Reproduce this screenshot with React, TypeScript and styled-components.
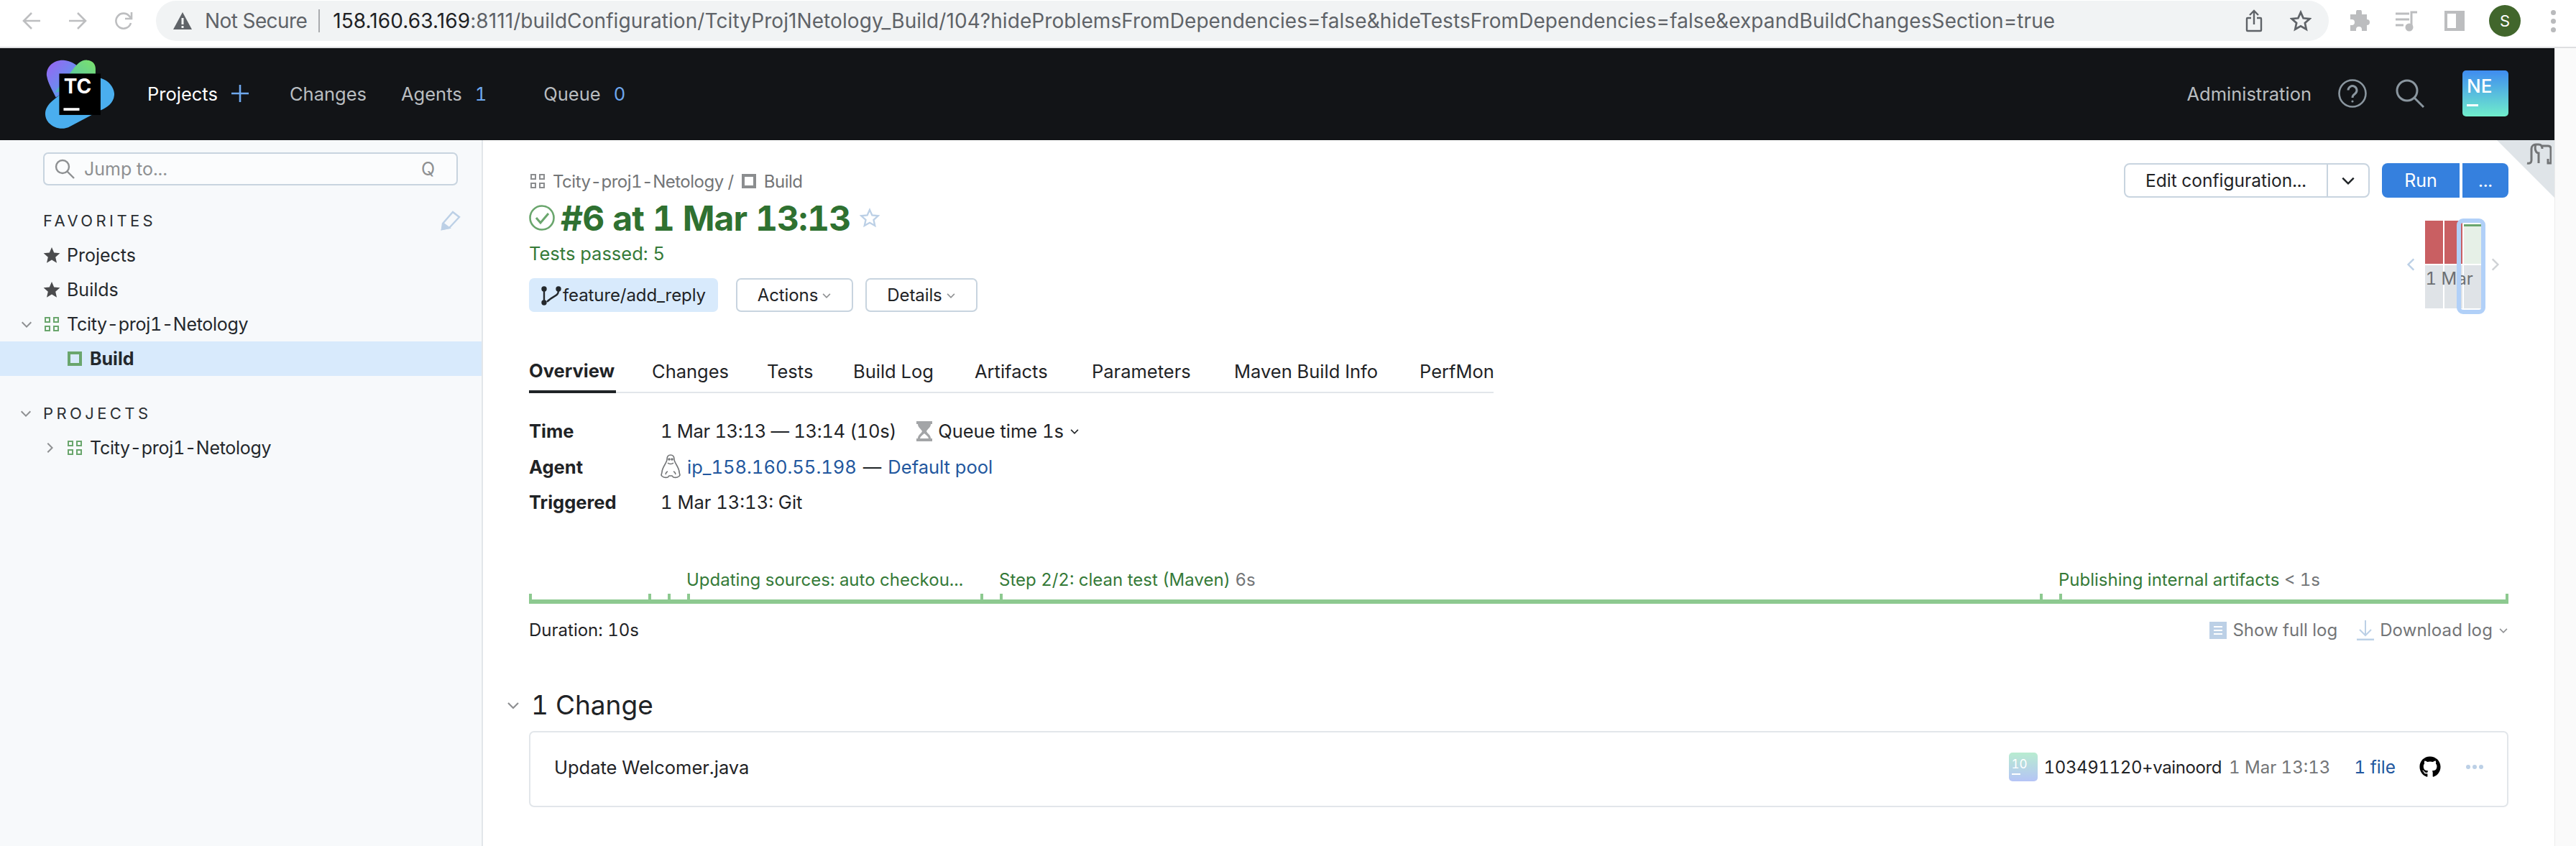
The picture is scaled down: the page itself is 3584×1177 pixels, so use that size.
import * as React from 'react';
import styled, { createGlobalStyle } from 'styled-components';
import { FaGithub } from 'react-icons/fa';

const GlobalStyle = createGlobalStyle`
    html, body {
        margin: 0;
        padding: 0;
        background: #fff;
        overflow: hidden;
    }
    body {
        font-family: Inter, "Liberation Sans", sans-serif;
        font-size: 26px;
        font-variant-numeric: tabular-nums;
        color: #1f2326;
    }
    * {
        box-sizing: border-box;
    }
`;

const Root = styled.div`
    width: 3584px;
    height: 1177px;
    overflow: hidden;
    display: flex;
    flex-direction: column;
`;

/* browser chrome */
const Chrome = styled.div`
    height: 67px;
    flex: none;
    display: flex;
    align-items: flex-start;
    border-bottom: 2px solid #dedfe1;
    background: #fff;
`;

const ChromeNav = styled.div`
    width: 217px;
    height: 58px;
    padding-left: 30px;
    display: flex;
    align-items: center;
    gap: 36px;
    flex: none;
`;

const AddressBar = styled.div`
    width: 3023px;
    height: 56px;
    margin-top: 1px;
    flex: none;
    border-radius: 28px;
    background: #f1f3f4;
    display: flex;
    align-items: center;
    padding: 0 24px;
    font-size: 28px;
    font-variant-numeric: normal;
    color: #5f6368;
    white-space: nowrap;
`;

const NotSecure = styled.span`
    margin-left: 18px;
    letter-spacing: -0.6px;
    color: #5f6368;
`;

const AddressDivider = styled.span`
    width: 2px;
    height: 32px;
    margin: 0 18px 0 16px;
    background: #a9abae;
`;

const UrlHost = styled.span`
    color: #202124;
    letter-spacing: 0.1px;
`;

const UrlRest = styled.span`
    letter-spacing: 0.08px;
`;

const BarIcons = styled.div`
    margin-left: auto;
    display: flex;
    align-items: center;
    gap: 38px;
`;

const ChromeTools = styled.div`
    flex: 1;
    height: 58px;
    padding-left: 28px;
    display: flex;
    align-items: center;
    gap: 34px;
`;

const ProfileDot = styled.div`
    width: 44px;
    height: 44px;
    border-radius: 50%;
    background: #41662c;
    color: #fff;
    font-size: 22px;
    display: flex;
    align-items: center;
    justify-content: center;
`;

const MoreDots = styled.div`
    display: flex;
    flex-direction: column;
    gap: 5px;
    margin-left: 8px;

    i {
        width: 7px;
        height: 7px;
        border-radius: 50%;
        background: #b9babc;
        display: block;
    }
`;

/* page */
const Viewport = styled.div`
    flex: 1;
    display: flex;
    min-height: 0;
`;

const Page = styled.div`
    width: 3554px;
    flex: none;
    display: flex;
    flex-direction: column;
`;

const ScrollStrip = styled.div`
    flex: 1;
    background: #fafafa;
    border-left: 1px solid #ececec;
`;

const Header = styled.header`
    height: 128px;
    flex: none;
    background: #121417;
    display: flex;
    align-items: center;
    padding: 0 64px 2px 62px;
`;

const LogoBox = styled.div`
    width: 97px;
    height: 97px;
    flex: none;
    margin: 2px 46px 0 0;
`;

const NavItem = styled.div<{ $gap?: number; $active?: boolean }>`
    display: flex;
    align-items: center;
    gap: 18px;
    margin-right: ${(p) => p.$gap ?? 0}px;
    color: ${(p) => (p.$active ? '#fff' : '#b9bdc0')};
    font-size: 25.5px;
`;

const NavCount = styled.span`
    color: #6fa8ee;
`;

const HeaderRight = styled.div`
    margin-left: auto;
    display: flex;
    align-items: center;
`;

const NavIcon = styled.div<{ $left: number }>`
    margin-left: ${(p) => p.$left}px;
    display: flex;
`;

const UserTile = styled.div`
    width: 64px;
    height: 64px;
    margin-left: 53px;
    border-radius: 5px;
    background: linear-gradient(#3f8cf0, #70edcb);
    color: #fff;
    font-size: 26px;
    font-weight: 500;
    line-height: 30px;
    padding: 7px 0 0 6px;
`;

const TileCursor = styled.div`
    width: 16px;
    height: 3px;
    margin-top: 10px;
    background: #fff;
`;

const Body = styled.div`
    flex: 1;
    display: flex;
    min-height: 0;
`;

/* sidebar */
const Sidebar = styled.aside`
    width: 672px;
    flex: none;
    background: #f7f9fb;
    border-right: 2px solid #e2e6ea;
    padding-top: 17px;
`;

const SearchBox = styled.div`
    width: 577px;
    height: 46px;
    margin-left: 60px;
    border: 2px solid #c8d4df;
    border-radius: 7px;
    background: #fbfcfd;
    display: flex;
    align-items: center;
    padding: 0 30px 0 14px;
    color: #8e9092;
    font-size: 25px;
    gap: 13px;
`;

const SearchKey = styled.span`
    margin-left: auto;
`;

const SectionHead = styled.div<{ $top: number }>`
    height: 48px;
    margin-top: ${(p) => p.$top}px;
    padding-left: 60px;
    padding-right: 29px;
    position: relative;
    display: flex;
    align-items: center;
    justify-content: space-between;
    font-size: 22px;
    letter-spacing: 4.4px;
    color: #2b2f33;
`;

const SectionChevron = styled.span`
    position: absolute;
    left: 27px;
    top: 15px;
    display: flex;
`;

const TreeRow = styled.div<{ $indent: number; $selected?: boolean }>`
    height: 48px;
    display: flex;
    align-items: center;
    gap: 11px;
    padding-left: ${(p) => p.$indent}px;
    background: ${(p) => (p.$selected ? '#d8eafc' : 'transparent')};
    font-weight: ${(p) => (p.$selected ? 700 : 400)};
    font-size: 25px;
    color: #24282c;
`;

const ProjectName = styled.span`
    letter-spacing: -0.28px;
`;

const TreeToggle = styled.span`
    width: 34px;
    margin-left: -34px;
    display: flex;
    flex: none;
    align-items: center;
    margin-right: -11px;
`;

/* main column */
const Main = styled.main`
    flex: 1;
    position: relative;
    padding: 0 64px;
    background: #fff;
`;

const CornerFlag = styled.div`
    position: absolute;
    top: 0;
    right: 0;
    width: 80px;
    height: 80px;
    background: #dfe4e8;
    clip-path: polygon(0 0, 100% 0, 100% 100%);
`;

const CornerIcon = styled.div`
    position: absolute;
    top: 4px;
    right: 4px;
`;

const TopSection = styled.div`
    display: flex;
    justify-content: space-between;
    align-items: flex-start;
`;

const TitleColumn = styled.div`
    display: flex;
    flex-direction: column;
`;

const Breadcrumb = styled.div`
    height: 34px;
    margin-top: 40px;
    padding-left: 2px;
    display: flex;
    align-items: center;
    gap: 11px;
    color: #737577;
    font-size: 24px;
    letter-spacing: -0.5px;
`;

const HeadingRow = styled.div`
    height: 56px;
    margin-top: 6px;
    display: flex;
    align-items: center;
`;

const BuildTitle = styled.h1`
    margin: 0 13px 0 8px;
    font-size: 48px;
    font-weight: 700;
    letter-spacing: -0.95px;
    color: #2f7131;
    white-space: nowrap;
`;

const TestsPassed = styled.div`
    height: 34px;
    margin-top: 4px;
    display: flex;
    align-items: center;
    font-size: 25.5px;
    color: #357a38;
`;

const TagRow = styled.div`
    margin-top: 18px;
    display: flex;
    gap: 17px;
`;

const BranchTag = styled.div`
    width: 263px;
    height: 47px;
    margin-right: 8px;
    padding-left: 17px;
    border-radius: 7px;
    background: #d8eafc;
    display: flex;
    align-items: center;
    gap: 2px;
    font-size: 24px;
    letter-spacing: -0.1px;
`;

const OutlineButton = styled.div<{ $width: number }>`
    width: ${(p) => p.$width}px;
    height: 47px;
    border: 2px solid #c8d4df;
    border-radius: 7px;
    display: flex;
    align-items: center;
    justify-content: center;
    gap: 5px;
    font-size: 24px;
    letter-spacing: -0.1px;
`;

const Tabs = styled.nav`
    width: 1342px;
    height: 60px;
    margin-top: 53px;
    display: flex;
    border-bottom: 2px solid #e2e6ea;
`;

const Tab = styled.div<{ $width: number; $active?: boolean }>`
    width: ${(p) => p.$width}px;
    flex: none;
    display: flex;
    align-items: center;
    font-size: 25.5px;

    ${(p) => (p.$active ? `
        font-weight: 700;
        height: 60px;
        border-bottom: 4px solid #1f2326;
        margin-right: 50px;
    ` : 'height: 58px;')}
`;

const ActionColumn = styled.div`
    margin-top: 32px;
    display: flex;
    flex-direction: column;
    align-items: flex-end;
`;

const ActionRow = styled.div`
    display: flex;
    gap: 17px;
`;

const EditGroup = styled.div`
    width: 342px;
    height: 48px;
    border: 2px solid #c8d4df;
    border-radius: 8px;
    display: flex;
    font-size: 24.5px;
`;

const EditLabel = styled.div`
    flex: 1;
    display: flex;
    align-items: center;
    justify-content: center;
    border-right: 2px solid #c8d4df;
`;

const EditCaret = styled.div`
    width: 56px;
    display: flex;
    align-items: center;
    justify-content: center;
`;

const RunGroup = styled.div`
    display: flex;
    gap: 4px;
`;

const RunButton = styled.div<{ $width: number; $side: 'left' | 'right' }>`
    width: ${(p) => p.$width}px;
    height: 48px;
    background: #3580de;
    color: #fff;
    display: flex;
    align-items: center;
    justify-content: center;
    font-size: 25px;
    border-radius: ${(p) => (p.$side === 'left' ? '8px 0 0 8px' : '0 8px 8px 0')};
`;

/* mini build chart */
const Chart = styled.div`
    margin: 32px 8px 0 0;
    width: 138px;
    height: 122px;
    position: relative;
    display: flex;
    justify-content: space-between;
    align-items: center;
`;

const ChartBars = styled.div`
    display: flex;
    gap: 2px;
    position: relative;
`;

const ChartColumn = styled.div`
    width: 25px;
    display: flex;
    flex-direction: column;
    gap: 2px;
`;

const BuildBar = styled.div<{ $ok?: boolean }>`
    height: 60px;
    background: ${(p) => (p.$ok ? '#e6f0e7' : '#c95f62')};
    border-top: ${(p) => (p.$ok ? '8px solid #fff' : 'none')};
    position: relative;

    ${(p) => (p.$ok ? `
        &::before {
            content: '';
            position: absolute;
            left: 0;
            right: 0;
            top: -3px;
            height: 3px;
            background: #6aa66d;
        }
    ` : '')}
`;

const DateCell = styled.div`
    height: 60px;
    background: #dfe3e7;
`;

const ChartDate = styled.div`
    position: absolute;
    left: 1px;
    top: 66px;
    color: #6c6f72;
    font-size: 24px;
    white-space: nowrap;
`;

const Selection = styled.div`
    position: absolute;
    left: 44px;
    top: -3px;
    width: 40px;
    height: 133px;
    border: 6px solid #b1d0f8;
    border-radius: 9px;
`;

/* info rows */
const InfoGrid = styled.div`
    margin-top: 28px;
    display: grid;
    grid-template-columns: 183px 1fr;
    grid-auto-rows: 49.5px;
    align-items: center;
    font-size: 25.5px;
`;

const InfoLabel = styled.div`
    font-weight: 700;
`;

const InfoValue = styled.div`
    display: flex;
    align-items: center;
    gap: 9px;
`;

const TimeRange = styled.span`
    letter-spacing: -0.3px;
`;

const QueueTime = styled.span`
    margin-left: 19px;
    display: flex;
    align-items: center;
    gap: 8px;
`;

const Link = styled.span`
    color: #22579e;
`;

/* timeline */
const Timeline = styled.div`
    margin-top: 66px;
    height: 50px;
    display: flex;
    align-items: flex-end;
    border-bottom: 6px solid #8dc990;
`;

const Segment = styled.div<{ $width: number }>`
    width: ${(p) => p.$width}px;
    flex: none;
    height: 8px;
    border-left: 4px solid #8dc990;
    position: relative;
`;

const SegmentLabel = styled.div`
    position: absolute;
    left: -5px;
    bottom: 10px;
    height: 34px;
    line-height: 34px;
    font-size: 24px;
    color: #357a38;
    white-space: nowrap;
`;

const Muted = styled.span`
    color: #737577;
`;

const DurationRow = styled.div`
    height: 36px;
    margin-top: 19px;
    display: flex;
    align-items: center;
    font-size: 24px;
`;

const LogAction = styled.div<{ $left?: number; $spacing?: number }>`
    display: flex;
    align-items: center;
    gap: 8px;
    margin-left: ${(p) => p.$left ?? 0}px;
    letter-spacing: ${(p) => p.$spacing ?? 0}px;
    color: #737577;
`;

const LogActions = styled.div`
    margin-left: auto;
    display: flex;
`;

/* changes */
const ChangesHead = styled.div`
    height: 48px;
    margin-top: 62px;
    margin-left: -32px;
    display: flex;
    align-items: center;
    gap: 15px;
    font-size: 37px;
`;

const ChangeCard = styled.div`
    height: 106px;
    margin-top: 12px;
    border: 2px solid #e2e6ea;
    border-radius: 7px;
    display: flex;
    align-items: center;
    padding: 0 0 5px 33px;
    font-size: 25.5px;
`;

const ChangeMeta = styled.div`
    margin-left: auto;
    display: flex;
    align-items: center;
    padding-right: 33px;
    font-size: 24px;
`;

const AuthorTile = styled.div`
    width: 40px;
    height: 40px;
    margin-right: 9px;
    border-radius: 5px;
    background: linear-gradient(#b8ecd0, #b5c4f6);
    color: #fff;
    font-size: 17px;
    line-height: 20px;
    padding: 6px 0 0 4px;
`;

const AuthorCursor = styled.div`
    width: 12px;
    height: 2px;
    margin-top: 3px;
    background: #fff;
`;

const AuthorName = styled.span`
    letter-spacing: -0.4px;
`;

const ChangeDate = styled.span`
    margin-left: 10px;
    color: #737577;
`;

const FileCount = styled(Link)`
    margin-left: 33px;
    font-size: 24.5px;
`;

const GithubMark = styled.span`
    margin-left: 33px;
    display: flex;
    color: #000;
`;

const DotsMenu = styled.span`
    margin-left: 35px;
    display: flex;
    gap: 3px;

    i {
        width: 6px;
        height: 6px;
        border-radius: 50%;
        background: #bcd0e6;
        display: block;
    }
`;

function Chevron({ size = 18, color = '#8e9092', dir = 'down' }: { size?: number, color?: string, dir?: string }): JSX.Element {
    const points = {
        down: '3,7 10,14 17,7',
        right: '7,3 14,10 7,17',
        left: '13,3 6,10 13,17',
    }[dir];
    return (
        <svg width={size} height={size} viewBox="0 0 20 20" fill="none" stroke={color} strokeWidth="2.2">
            <polyline points={points} />
        </svg>
    );
}

function ProjectIcon({ color = '#6aa66d' }: { color?: string }): JSX.Element {
    return (
        <svg width="20" height="20" viewBox="0 0 20 20" fill="none" stroke={color} strokeWidth="2" style={{ flex: 'none' }}>
            <rect x="1" y="1" width="6" height="6" />
            <rect x="13" y="1" width="6" height="6" />
            <rect x="1" y="13" width="6" height="6" />
            <rect x="13" y="13" width="6" height="6" />
        </svg>
    );
}

function BuildIcon({ color = '#6aa66d' }: { color?: string }): JSX.Element {
    return (
        <svg width="20" height="20" viewBox="0 0 20 20" fill="none" stroke={color} strokeWidth="4" style={{ flex: 'none' }}>
            <rect x="2" y="2" width="16" height="16" />
        </svg>
    );
}

function StarIcon(): JSX.Element {
    return (
        <svg width="24" height="24" viewBox="0 0 24 24" fill="#4a4b4d" style={{ flex: 'none', marginRight: -2 }}>
            <polygon points="12,1 15.2,8.6 23.4,9.3 17.2,14.7 19,22.8 12,18.5 5,22.8 6.8,14.7 0.6,9.3 8.8,8.6" />
        </svg>
    );
}

function Logo(): JSX.Element {
    return (
        <svg width="97" height="97" viewBox="183 68 290 290">
            <defs>
                <linearGradient id="logoPurple" x1="0" y1="0" x2="1" y2="1">
                    <stop offset="0" stopColor="#9a62f2" />
                    <stop offset="1" stopColor="#45aeee" />
                </linearGradient>
                <linearGradient id="logoGreen" x1="1" y1="0" x2="0" y2="1">
                    <stop offset="0" stopColor="#7be36a" />
                    <stop offset="1" stopColor="#4ab3c8" />
                </linearGradient>
            </defs>
            <path d="M262 70C220 68 185 100 193 140C197 165 215 195 230 225L300 180L335 105C310 85 290 72 262 70Z" fill="url(#logoPurple)" />
            <path d="M417 145C450 155 475 185 473 215C470 250 440 268 417 278L290 345C260 362 225 355 200 330C175 300 185 265 215 240L300 170Z" fill="#4aaeee" />
            <path d="M360 70C335 68 320 85 300 110L225 205L395 180L395 105C395 85 380 70 360 70Z" fill="url(#logoGreen)" />
            <rect x="244" y="126" width="172" height="172" fill="#000" />
            <text x="263" y="210" fill="#fff" fontFamily="Inter, sans-serif" fontWeight="700" fontSize="84">TC</text>
            <rect x="262" y="269" width="66" height="11" fill="#fff" />
        </svg>
    );
}

const timeline = [
    { width: 166 },
    { width: 27 },
    { width: 27 },
    { width: 408, label: 'Updating sources: auto checkou...' },
    { width: 27 },
    { width: 1447, label: 'Step 2/2: clean test (Maven)', time: ' 6s' },
    { width: 27 },
    { width: 621, label: 'Publishing internal artifacts', time: ' < 1s' },
    { width: 4 },
];

const tabs = [
    { name: 'Changes', width: 160 },
    { name: 'Tests', width: 120 },
    { name: 'Build Log', width: 169 },
    { name: 'Artifacts', width: 163 },
    { name: 'Parameters', width: 198 },
    { name: 'Maven Build Info', width: 258 },
    { name: 'PerfMon', width: 103 },
];

export default function App(): JSX.Element {
    return (
        <Root>
            <GlobalStyle />
            <Chrome>
                <ChromeNav>
                    <svg width="28" height="28" viewBox="0 0 28 28" fill="none" stroke="#bdbec0" strokeWidth="2.6"><path d="M26 14H3M14 3L3 14l11 11" /></svg>
                    <svg width="28" height="28" viewBox="0 0 28 28" fill="none" stroke="#bdbec0" strokeWidth="2.6"><path d="M2 14h23M14 3l11 11-11 11" /></svg>
                    <svg width="28" height="28" viewBox="0 0 28 28" fill="none" stroke="#bdbec0" strokeWidth="2.6"><path d="M24 17a10.5 10.5 0 1 1-2-9.5L25 11M25 2v9h-9" /></svg>
                </ChromeNav>
                <AddressBar>
                    <svg width="26" height="26" viewBox="0 0 26 26" style={{ flex: 'none' }}><path d="M13 1L26 25H0Z" fill="#5f6368" /><rect x="11.5" y="9" width="3" height="9" fill="#f1f3f4" /><rect x="11.5" y="20" width="3" height="3" fill="#f1f3f4" /></svg>
                    <NotSecure>Not Secure</NotSecure>
                    <AddressDivider />
                    <UrlHost>158.160.63.169</UrlHost>
                    <UrlRest>:8111/buildConfiguration/TcityProj1Netology_Build/104?hideProblemsFromDependencies=false&amp;hideTestsFromDependencies=false&amp;expandBuildChangesSection=true</UrlRest>
                    <BarIcons>
                        <svg width="24" height="32" viewBox="0 0 24 32" fill="none" stroke="#5f6368" strokeWidth="2.4"><path d="M8 12H3a1 1 0 0 0-1 1v16a1 1 0 0 0 1 1h18a1 1 0 0 0 1-1V13a1 1 0 0 0-1-1h-5M12 21V3M6 8l6-6 6 6" /></svg>
                        <svg width="30" height="30" viewBox="0 0 24 24" fill="none" stroke="#5f6368" strokeWidth="2.2"><polygon points="12,2.5 14.9,9 22,9.7 16.7,14.4 18.2,21.4 12,17.8 5.8,21.4 7.3,14.4 2,9.7 9.1,9" /></svg>
                    </BarIcons>
                </AddressBar>
                <ChromeTools>
                    <svg width="30" height="30" viewBox="0 0 30 30" fill="#bcbdbf"><path d="M11 2a4 4 0 0 1 8 0v3h7v7a4 4 0 0 1 4 4 4 4 0 0 1-4 4v8h-7v-2a4 4 0 0 0-8 0v2H3v-8h2a4 4 0 0 0 0-8H3V5h8Z" transform="translate(-1 1)" /></svg>
                    <svg width="32" height="30" viewBox="0 0 32 30" fill="none" stroke="#bcbdbf" strokeWidth="3"><path d="M1 5h19M1 13h19M1 21h11M23 23V3h8" /><circle cx="20" cy="24" r="4" fill="#bcbdbf" /></svg>
                    <svg width="28" height="28" viewBox="0 0 28 28" fill="none" stroke="#bcbdbf" strokeWidth="4" style={{ marginLeft: 3 }}><path d="M2 2h24v24H2ZM18 2v24" /><rect x="18" y="2" width="8" height="24" fill="#bcbdbf" /></svg>
                    <ProfileDot>S</ProfileDot>
                    <MoreDots><i /><i /><i /></MoreDots>
                </ChromeTools>
            </Chrome>
            <Viewport>
                <Page>
                    <Header>
                        <LogoBox><Logo /></LogoBox>
                        <NavItem $gap={56} $active>
                            Projects
                            <svg width="26" height="26" viewBox="0 0 26 26" stroke="#6fa8ee" strokeWidth="2.6"><path d="M13 1v24M1 13h24" /></svg>
                        </NavItem>
                        <NavItem $gap={48}>Changes</NavItem>
                        <NavItem $gap={79}>Agents<NavCount>1</NavCount></NavItem>
                        <NavItem>Queue<NavCount>0</NavCount></NavItem>
                        <HeaderRight>
                            <NavItem>Administration</NavItem>
                            <NavIcon $left={37}>
                                <svg width="40" height="40" viewBox="0 0 40 40" fill="none" stroke="#8a969f" strokeWidth="2.6">
                                    <circle cx="20" cy="20" r="18.5" />
                                    <path d="M14 15.5a6 6 0 1 1 9.5 5c-2 1.4-3.5 2.4-3.5 5.5" strokeWidth="3" />
                                    <circle cx="20" cy="31" r="1.6" fill="#8a969f" stroke="none" />
                                </svg>
                            </NavIcon>
                            <NavIcon $left={40}>
                                <svg width="40" height="40" viewBox="0 0 40 40" fill="none" stroke="#8a969f" strokeWidth="3">
                                    <circle cx="16" cy="16" r="14" />
                                    <path d="M26 26l13 13" />
                                </svg>
                            </NavIcon>
                            <UserTile>
                                NE
                                <TileCursor />
                            </UserTile>
                        </HeaderRight>
                    </Header>
                    <Body>
                        <Sidebar>
                            <SearchBox>
                                <svg width="28" height="28" viewBox="0 0 28 28" fill="none" stroke="#8e9092" strokeWidth="2.4"><circle cx="11" cy="11" r="9" /><path d="M17.5 17.5L27 27" /></svg>
                                Jump to...
                                <SearchKey>Q</SearchKey>
                            </SearchBox>
                            <SectionHead $top={25}>
                                FAVORITES
                                <svg width="28" height="28" viewBox="0 0 28 28" fill="none" stroke="#bcd0e6" strokeWidth="2.4"><path d="M2 26l1-8L17 2l9 7-14 15Z" /><path d="M2 26l2-8 8 6Z" fill="#bcd0e6" /></svg>
                            </SectionHead>
                            <TreeRow $indent={60}><StarIcon />Projects</TreeRow>
                            <TreeRow $indent={60}><StarIcon />Builds</TreeRow>
                            <TreeRow $indent={62}>
                                <TreeToggle><Chevron /></TreeToggle>
                                <ProjectIcon />
                                <ProjectName>Tcity-proj1-Netology</ProjectName>
                            </TreeRow>
                            <TreeRow $indent={94} $selected><BuildIcon />Build</TreeRow>
                            <SectionHead $top={28}>
                                <SectionChevron><Chevron /></SectionChevron>
                                PROJECTS
                            </SectionHead>
                            <TreeRow $indent={94}>
                                <TreeToggle><Chevron dir="right" /></TreeToggle>
                                <ProjectIcon />
                                <ProjectName>Tcity-proj1-Netology</ProjectName>
                            </TreeRow>
                        </Sidebar>
                        <Main>
                            <CornerFlag />
                            <CornerIcon>
                                <svg width="36" height="32" viewBox="0 0 36 32" fill="none" stroke="#737577" strokeWidth="3"><path d="M2 28c4 1 6-1 6-4V8c0-4 3-6 6-6h4c3 0 5 2 5 6M23 4h8c3 0 4 2 4 4v20h-4v-6M14 2c-2 6 0 12 4 12v14" /></svg>
                            </CornerIcon>
                            <TopSection>
                                <TitleColumn>
                                    <Breadcrumb>
                                        <ProjectIcon color="#8b8d8f" />
                                        Tcity-proj1-Netology /
                                        <BuildIcon color="#8b8d8f" />
                                        Build
                                    </Breadcrumb>
                                    <HeadingRow>
                                        <svg width="36" height="36" viewBox="0 0 36 36" fill="none" stroke="#6aa66d" strokeWidth="2.6" style={{ flex: 'none' }}>
                                            <circle cx="18" cy="18" r="16.5" />
                                            <path d="M10 18l6 7 11-13" strokeWidth="3" />
                                        </svg>
                                        <BuildTitle>#6 at 1 Mar 13:13</BuildTitle>
                                        <svg width="28" height="28" viewBox="0 0 24 24" fill="none" stroke="#bcd0e6" strokeWidth="2"><polygon points="12,2.5 14.9,9 22,9.7 16.7,14.4 18.2,21.4 12,17.8 5.8,21.4 7.3,14.4 2,9.7 9.1,9" /></svg>
                                    </HeadingRow>
                                    <TestsPassed>Tests passed: 5</TestsPassed>
                                    <TagRow>
                                        <BranchTag>
                                            <svg width="28" height="28" viewBox="0 0 28 28" fill="none" stroke="#24282c" strokeWidth="2.4"><circle cx="4" cy="5" r="2.5" fill="#24282c" /><circle cx="4" cy="24" r="2.5" fill="#24282c" /><circle cx="24" cy="5" r="2.5" fill="#24282c" /><path d="M4 6v17M24 7c0 9-8 7-16 16" /></svg>
                                            feature/add_reply
                                        </BranchTag>
                                        <OutlineButton $width={163}>Actions<Chevron size={14} /></OutlineButton>
                                        <OutlineButton $width={156}>Details<Chevron size={14} /></OutlineButton>
                                    </TagRow>
                                    <Tabs>
                                        <Tab $width={121} $active>Overview</Tab>
                                        {tabs.map((t) => <Tab key={t.name} $width={t.width}>{t.name}</Tab>)}
                                    </Tabs>
                                </TitleColumn>
                                <ActionColumn>
                                    <ActionRow>
                                        <EditGroup>
                                            <EditLabel>Edit configuration...</EditLabel>
                                            <EditCaret><Chevron size={22} color="#1f2326" /></EditCaret>
                                        </EditGroup>
                                        <RunGroup>
                                            <RunButton $width={108} $side="left">Run</RunButton>
                                            <RunButton $width={64} $side="right">...</RunButton>
                                        </RunGroup>
                                    </ActionRow>
                                    <Chart>
                                        <Chevron size={22} color="#bcd0e6" dir="left" />
                                        <ChartBars>
                                            <ChartColumn><BuildBar /><DateCell /></ChartColumn>
                                            <ChartColumn><BuildBar /><DateCell /></ChartColumn>
                                            <ChartColumn><BuildBar $ok /><DateCell /></ChartColumn>
                                            <ChartDate>1 Mar</ChartDate>
                                            <Selection />
                                        </ChartBars>
                                        <Chevron size={22} color="#cfd2d5" dir="right" />
                                    </Chart>
                                </ActionColumn>
                            </TopSection>
                            <InfoGrid>
                                <InfoLabel>Time</InfoLabel>
                                <InfoValue>
                                    <TimeRange>1 Mar 13:13 — 13:14 (10s)</TimeRange>
                                    <QueueTime>
                                        <svg width="22" height="28" viewBox="0 0 22 28" fill="#a3a5a7" style={{ flex: 'none' }}><path d="M0 0h22v4h-2c0 5-5 7-6 10 1 3 6 5 6 10h2v4H0v-4h2c0-5 5-7 6-10-1-3-6-5-6-10H0Zm5 24h12c-.5-3-4-5-6-7-2 2-5.500 4-6 7Z" /></svg>
                                        Queue time 1s
                                        <Chevron size={14} color="#1f2326" />
                                    </QueueTime>
                                </InfoValue>
                                <InfoLabel>Agent</InfoLabel>
                                <InfoValue>
                                    <svg width="28" height="34" viewBox="0 0 28 34" fill="none" stroke="#737577" strokeWidth="1.6" style={{ flex: 'none' }}><path d="M14 1c-4 0-5 3-5 6 0 5-7 11-7 18l-1 4c1 3 6 4 9 3l2-2h4l2 2c3 1 8 0 9-3l-1-4c0-7-7-13-7-18 0-3-1-6-5-6Z" /><path d="M10 12c2 2 6 2 8 0M7 28c1-3 1-3 3-4M21 28c-1-3-1-3-3-4" /><circle cx="12" cy="7" r="1" fill="#737577" /><circle cx="16" cy="7" r="1" fill="#737577" /></svg>
                                    <Link>ip_158.160.55.198</Link>
                                    —
                                    <Link>Default pool</Link>
                                </InfoValue>
                                <InfoLabel>Triggered</InfoLabel>
                                <InfoValue>1 Mar 13:13: Git</InfoValue>
                            </InfoGrid>
                            <Timeline>
                                {timeline.map((s) => (
                                    <Segment key={s.width + (s.label ?? '')} $width={s.width}>
                                        {s.label ? (
                                            <SegmentLabel>
                                                {s.label}
                                                <Muted>{s.time}</Muted>
                                            </SegmentLabel>
                                        ) : null}
                                    </Segment>
                                ))}
                            </Timeline>
                            <DurationRow>
                                Duration: 10s
                                <LogActions>
                                    <LogAction>
                                        <svg width="24" height="24" viewBox="0 0 24 24"><rect width="24" height="24" fill="#bcd0e6" /><path d="M6 7h12M6 12h12M6 17h12" stroke="#fff" strokeWidth="2" /></svg>
                                        Show full log
                                    </LogAction>
                                    <LogAction $left={27} $spacing={0.15}>
                                        <svg width="24" height="28" viewBox="0 0 24 28" fill="none" stroke="#bcd0e6" strokeWidth="2"><path d="M12 0v21M4 13l8 8 8-8" /><path d="M0 27h24" strokeWidth="3" /></svg>
                                        Download log
                                        <Chevron size={14} />
                                    </LogAction>
                                </LogActions>
                            </DurationRow>
                            <ChangesHead>
                                <Chevron size={20} />
                                1 Change
                            </ChangesHead>
                            <ChangeCard>
                                Update Welcomer.java
                                <ChangeMeta>
                                    <AuthorTile>
                                        10
                                        <AuthorCursor />
                                    </AuthorTile>
                                    <AuthorName>103491120+vainoord</AuthorName>
                                    <ChangeDate>1 Mar 13:13</ChangeDate>
                                    <FileCount>1 file</FileCount>
                                    <GithubMark><FaGithub size={30} /></GithubMark>
                                    <DotsMenu><i /><i /><i /></DotsMenu>
                                </ChangeMeta>
                            </ChangeCard>
                        </Main>
                    </Body>
                </Page>
                <ScrollStrip />
            </Viewport>
        </Root>
    );
}
